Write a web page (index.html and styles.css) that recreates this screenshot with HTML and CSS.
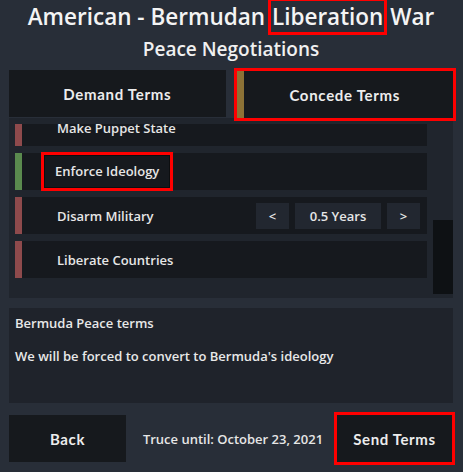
FILE: index.html
```html
<!DOCTYPE html>
<html>
<head>
<meta charset="utf-8">
<link rel="stylesheet" href="styles.css">
</head>
<body>
<div class="screen">
  <header class="head">
    <h1 class="title">American - Bermudan <span class="mark">Liberation</span> War</h1>
    <h2 class="subtitle">Peace Negotiations</h2>
  </header>
  <div class="tabs">
    <div class="tab">Demand Terms</div>
    <div class="tab tab-active mark-box"><span class="tab-bar"></span>Concede Terms</div>
  </div>
  <div class="panel">
    <div class="list">
      <div class="rows">
        <div class="row row-first"><span class="ind ind-red"></span><span class="label">Make Puppet State</span></div>
        <div class="row"><span class="ind ind-green"></span><span class="label mark-label">Enforce Ideology</span></div>
        <div class="row"><span class="ind ind-red"></span><span class="label">Disarm Military</span>
          <div class="stepper">
            <span class="step-btn">&lt;</span>
            <span class="step-val">0.5 Years</span>
            <span class="step-btn">&gt;</span>
          </div>
        </div>
        <div class="row"><span class="ind ind-red"></span><span class="label">Liberate Countries</span></div>
      </div>
    </div>
    <div class="track"><div class="thumb"></div></div>
  </div>
  <div class="desc">
    <p class="desc-title">Bermuda Peace terms</p>
    <p class="desc-text">We will be forced to convert to Bermuda's ideology</p>
  </div>
  <footer class="foot">
    <div class="btn">Back</div>
    <div class="truce">Truce until: October 23, 2021</div>
    <div class="btn btn-send mark-box">Send Terms</div>
  </footer>
</div>
</body>
</html>
```

FILE: styles.css
```css
* { box-sizing: border-box; }
html, body { margin: 0; padding: 0; }
body {
  background: #282e38;
  font-family: "Open Sans", "Noto Sans", sans-serif;
  color: #ececec;
  width: 463px;
  height: 472px;
  overflow: hidden;
}
.screen {
  padding: 0 10px 0 9px;
}
.head {
  text-align: center;
}
.title {
  margin: 0;
  font-size: 22.5px;
  line-height: 34px;
  font-weight: 600;
  color: #f4f4f4;
}
.mark {
  outline: 3px solid #ff0000;
  outline-offset: 0px;
  padding: 0 1px;
}
.subtitle {
  margin: 0;
  font-size: 19px;
  line-height: 30px;
  font-weight: 600;
  color: #f0f0f0;
}
.tabs {
  margin-top: 6px;
  display: flex;
  gap: 11px;
}
.tab {
  flex: 1;
  height: 47px;
  background: #16191d;
  display: flex;
  align-items: center;
  justify-content: center;
  font-family: "Lato", sans-serif;
  font-weight: 700;
  font-size: 15px;
  letter-spacing: 0.7px;
  color: #ececec;
  position: relative;
}
.tab-active {
  margin-top: 1px;
}
.tab-bar {
  position: absolute;
  left: 0;
  top: 0;
  bottom: 0;
  width: 7px;
  background: #8c7236;
}
.mark-box {
  outline: 3px solid #ff0000;
  outline-offset: 0px;
}
.panel {
  height: 180px;
  background: #20252d;
  display: flex;
  padding-top: 6px;
}
.list {
  flex: 1;
  overflow: hidden;
  padding-left: 6px;
}
.rows {
  display: flex;
  flex-direction: column;
  gap: 7px;
  margin-top: -15px;
}
.row {
  height: 37px;
  background: #16191e;
  display: flex;
  align-items: center;
  padding-right: 7px;
}
.ind {
  width: 7px;
  align-self: stretch;
}
.ind-red { background: #8e4a4c; }
.ind-green { background: #5a8a4e; }
.label {
  margin-left: 35px;
  font-size: 13px;
  font-weight: 600;
  color: #e6e6e6;
  flex: 1;
}
.mark-label {
  flex: 0 0 auto;
  margin-left: 22px;
  padding: 6px 10px 7px 10px;
  outline: 3px solid #ff0000;
  border: 1px solid #0c0e10;
  margin-right: auto;
}
.stepper {
  display: flex;
  gap: 6px;
}
.step-btn, .step-val {
  height: 26px;
  background: #222730;
  display: flex;
  align-items: center;
  justify-content: center;
  font-size: 13px;
  font-weight: 600;
  color: #e6e6e6;
}
.step-btn { width: 33px; }
.step-val { width: 86px; }
.track {
  width: 26px;
  display: flex;
  justify-content: flex-end;
}
.thumb {
  width: 20px;
  height: 74px;
  margin-top: 96px;
  background: #0e1114;
}
.desc {
  margin-top: 10px;
  height: 95px;
  background: #1f232b;
  padding: 6px 6px;
}
.desc p {
  margin: 0;
  font-size: 13px;
  font-weight: 600;
  color: #e8e8e8;
  line-height: 18px;
}
.desc-text {
  padding-top: 15px;
}
.foot {
  margin-top: 12px;
  display: flex;
  align-items: center;
  justify-content: space-between;
  padding-right: 1px;
}
.btn {
  width: 117px;
  height: 47px;
  background: #16191d;
  display: flex;
  align-items: center;
  justify-content: center;
  font-family: "Lato", sans-serif;
  font-weight: 700;
  font-size: 15px;
  letter-spacing: 0.6px;
  color: #ececec;
}
.btn-send {
  width: 115px;
}
.truce {
  font-size: 13px;
  font-weight: 600;
  color: #e6e6e6;
  padding-left: 3px;
}
```
